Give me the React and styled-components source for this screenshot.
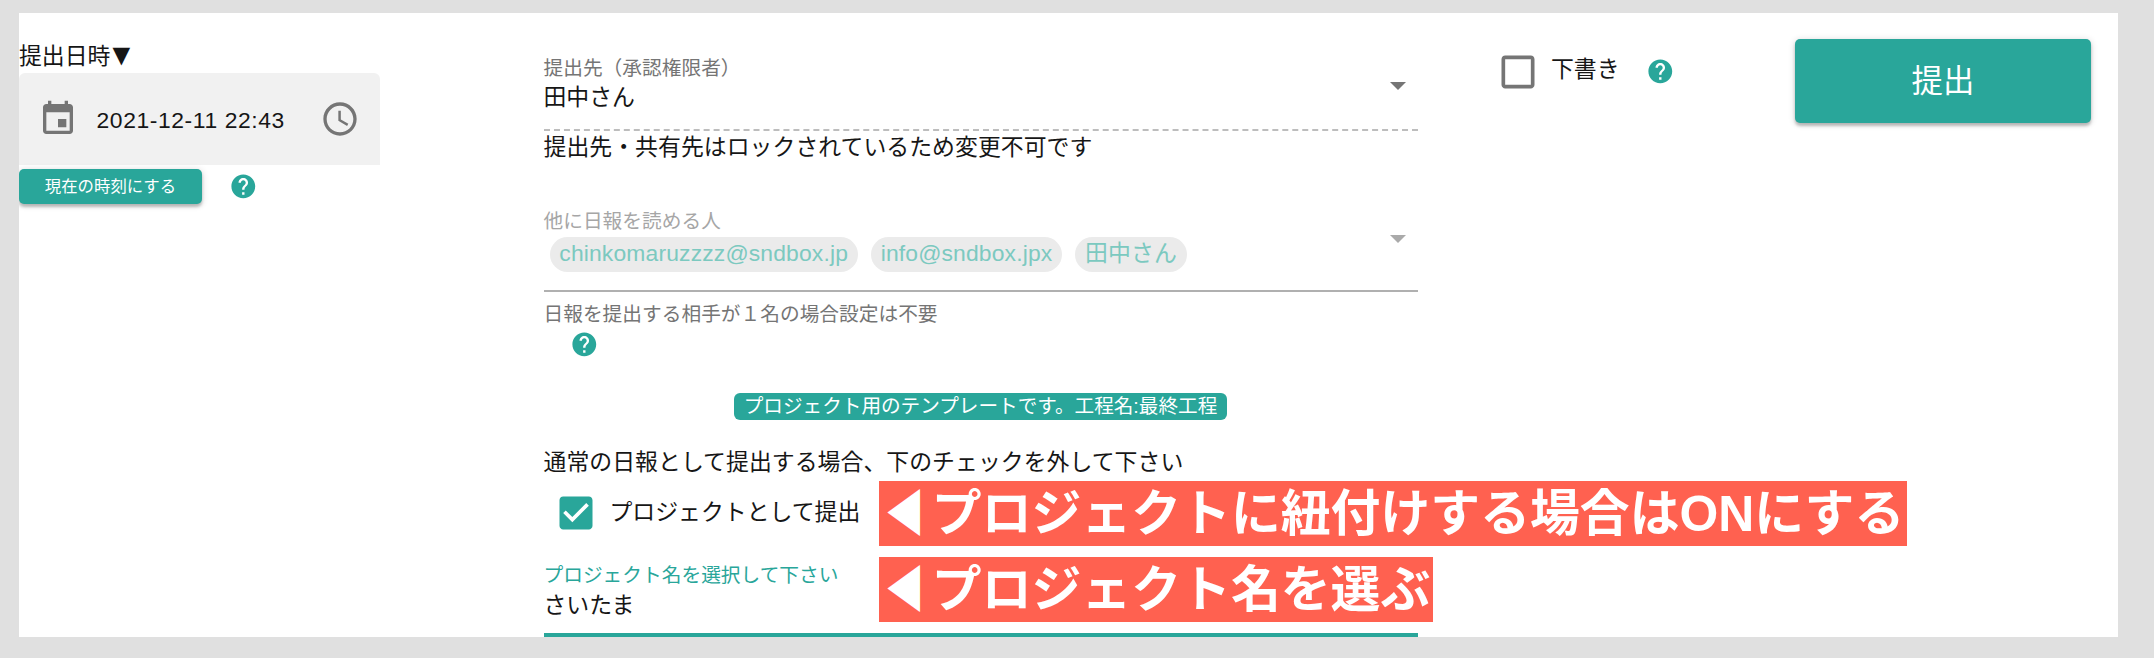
import React from "react";
import styled, { createGlobalStyle } from "styled-components";

const teal = "#29a69a";

const GlobalStyle = createGlobalStyle`
  body {
    margin: 0;
    background: #e0e0e0;
    color: #161616;
    font-family: "Liberation Sans", "Noto Sans CJK JP", sans-serif;
    font-size: 22.86px;
  }
  * { box-sizing: border-box; }
`;

const Page = styled.div`
  height: 658px;
  padding: 13px 36px 21px 19px;
  background: #e0e0e0;
`;

const Panel = styled.main`
  position: relative;
  display: flex;
  align-items: flex-start;
  height: 624px;
  background: #fff;
  overflow: hidden;
  white-space: nowrap;
`;

const DateColumn = styled.section`
  width: 524.5px;
  padding-top: 26px;
`;

const DateLabel = styled.div`
  display: flex;
  height: 34px;
  line-height: 34px;
`;

const DownMark = styled.span`
  margin-left: -4px;
  font-size: 30px;
  line-height: 31px;
`;

const DateField = styled.div`
  display: flex;
  align-items: center;
  width: 361px;
  height: 92px;
  padding: 0 20px 0 19px;
  border-radius: 6px 6px 0 0;
  background: #f1f1f1;
`;

const DateValue = styled.span`
  flex: 1;
  margin-left: 18.5px;
  padding-top: 2px;
  letter-spacing: 0.6px;
`;

const NowRow = styled.div`
  display: flex;
  align-items: center;
  gap: 26.5px;
  margin-top: 4px;
`;

const Button = styled.button`
  width: ${(p) => (p.$large ? 296 : 183)}px;
  height: ${(p) => (p.$large ? 84 : 35)}px;
  padding: 0 0 ${(p) => (p.$large ? 5 : 3)}px;
  border: 0;
  border-radius: 5px;
  background: ${teal};
  color: #fff;
  font-family: inherit;
  font-size: ${(p) => (p.$large ? 31.4 : 16.4)}px;
  box-shadow: 0 3px 3px rgba(0, 0, 0, 0.22), 0 1px 7px rgba(0, 0, 0, 0.16);
`;

const FormColumn = styled.section`
  display: flex;
  flex-direction: column;
  width: 874px;
  padding-top: 41px;
`;

const Select = styled.div`
  display: flex;
  align-items: center;
  justify-content: space-between;
  padding: 0 12px ${(p) => p.$bottom}px 0;
  margin-top: ${(p) => p.$top || 0}px;
  border-bottom: ${(p) => p.$line};
`;

const Label = styled.div`
  height: 28px;
  line-height: 28px;
  font-size: 19.72px;
  color: ${(p) => p.$color || "#757575"};
`;

const Value = styled.div`
  height: 33px;
  line-height: ${(p) => p.$line || 31}px;
`;

const Arrow = styled.i`
  border: 8px solid transparent;
  border-top-color: ${(p) => p.$color};
  border-bottom: 0;
  margin-bottom: ${(p) => p.$lift || 0}px;
`;

const Chips = styled.div`
  display: flex;
  gap: 13px;
  padding: 2px 0 0 6px;
`;

const Chip = styled.span`
  height: 35px;
  line-height: 33px;
  padding: 0 9.8px;
  border-radius: 17.5px;
  background: #ebebeb;
  color: #7cc9c0;
  letter-spacing: 0.16px;
`;

const Note = styled.p`
  margin: ${(p) => p.$top || 0}px 0 0;
  height: 32px;
  line-height: 32px;
  letter-spacing: 0.04px;
`;

const HelperText = styled(Label)`
  margin-top: 8px;
`;

const HelpRow = styled.div`
  display: flex;
  padding: 2px 0 1px 26px;
`;

const Badge = styled.div`
  align-self: center;
  height: 27px;
  margin-top: 33px;
  padding: 0 10px;
  border-radius: 6px;
  background: ${teal};
  color: #fff;
  font-size: 19.62px;
  line-height: 27px;
`;

const CheckRow = styled.label`
  display: flex;
  align-items: center;
  height: 44px;
  margin: 13.5px 0 0 10.5px;
`;

const CheckText = styled.span`
  margin: 0 0 0 11.5px;
  padding-bottom: ${(p) => p.$lift}px;
`;

const DraftColumn = styled.section`
  display: flex;
  align-items: center;
  width: 299.5px;
  height: 44px;
  margin: 37px 0 0 78px;
`;

const DraftHelp = styled.span`
  display: flex;
  margin: -2px 0 0 26px;
`;

const SubmitColumn = styled.section`
  padding-top: 26px;
`;

const Callout = styled.div`
  position: absolute;
  left: 860px;
  top: ${(p) => p.$top}px;
  display: flex;
  width: ${(p) => p.$width}px;
  height: 65px;
  padding-left: 3px;
  background: #ff6150;
  color: #fff;
  font-size: 49.85px;
  font-weight: 700;
  line-height: 66px;
`;

const Pointer = styled.span`
  transform: translateX(-2px) scaleX(0.8);
`;

const Icon = styled.svg`
  display: block;
  flex: none;
  width: ${(p) => p.$size}px;
  height: ${(p) => p.$size}px;
  fill: ${(p) => p.$color};
`;

const EventIcon = () => (
  <Icon viewBox="0 0 24 24" $size={40} $color="#757575">
    <path d="M17 12h-5v5h5v-5zM16 1v2H8V1H6v2H5c-1.11 0-1.99.9-1.99 2L3 19c0 1.1.89 2 2 2h14c1.1 0 2-.9 2-2V5c0-1.1-.9-2-2-2h-1V1h-2zm3 18H5V8h14v11z" />
  </Icon>
);

const ClockIcon = () => (
  <Icon viewBox="0 0 24 24" $size={40} $color="#757575">
    <path d="M11.99 2C6.47 2 2 6.48 2 12s4.47 10 9.99 10C17.52 22 22 17.52 22 12S17.52 2 11.99 2zM12 20c-4.42 0-8-3.58-8-8s3.58-8 8-8 8 3.58 8 8-3.58 8-8 8zm.5-13H11v6l5.25 3.15.75-1.23-4.5-2.67V7z" />
  </Icon>
);

const HelpIcon = () => (
  <Icon viewBox="0 0 24 24" $size={28.6} $color={teal}>
    <path d="M12 2C6.48 2 2 6.48 2 12s4.48 10 10 10 10-4.48 10-10S17.52 2 12 2zm1 17h-2v-2h2v2zm2.07-7.75l-.9.92C13.45 12.9 13 13.5 13 15h-2v-.5c0-1.1.45-2.1 1.17-2.83l1.24-1.26c.37-.36.59-.86.59-1.41 0-1.1-.9-2-2-2s-2 .9-2 2H8c0-2.21 1.79-4 4-4s4 1.79 4 4c0 .88-.36 1.68-.93 2.25z" />
  </Icon>
);

const CheckboxIcon = ({ checked }) => (
  <Icon viewBox="0 0 24 24" $size={44} $color={checked ? teal : "#757575"}>
    <path
      d={
        checked
          ? "M19 3H5c-1.11 0-2 .9-2 2v14c0 1.1.89 2 2 2h14c1.11 0 2-.9 2-2V5c0-1.1-.89-2-2-2zm-9 14l-5-5 1.41-1.41L10 14.17l7.59-7.59L19 8l-9 9z"
          : "M19 5v14H5V5h14m0-2H5c-1.1 0-2 .9-2 2v14c0 1.1.9 2 2 2h14c1.1 0 2-.9 2-2V5c0-1.1-.9-2-2-2z"
      }
    />
  </Icon>
);

const readers = ["chinkomaruzzzz@sndbox.jp", "info@sndbox.jpx", "田中さん"];

export default function App() {
  return (
    <Page lang="ja">
      <GlobalStyle />
      <Panel>
        <DateColumn>
          <DateLabel>
            提出日時<DownMark>▼</DownMark>
          </DateLabel>
          <DateField>
            <EventIcon />
            <DateValue>2021-12-11 22:43</DateValue>
            <ClockIcon />
          </DateField>
          <NowRow>
            <Button>現在の時刻にする</Button>
            <HelpIcon />
          </NowRow>
        </DateColumn>

        <FormColumn>
          <Select $bottom={14} $line="2px dashed #bdbdbd">
            <div>
              <Label>提出先（承認権限者）</Label>
              <Value>田中さん</Value>
            </div>
            <Arrow $color="#757575" $lift={-3} />
          </Select>
          <Note>提出先・共有先はロックされているため変更不可です</Note>

          <Select $top={44} $bottom={18} $line="2px solid #b0b0b0">
            <div>
              <Label $color="#a6a6a6">他に日報を読める人</Label>
              <Chips>
                {readers.map((name) => (
                  <Chip key={name}>{name}</Chip>
                ))}
              </Chips>
            </div>
            <Arrow $color="#aaa" $lift={1} />
          </Select>
          <HelperText>日報を提出する相手が１名の場合設定は不要</HelperText>
          <HelpRow>
            <HelpIcon />
          </HelpRow>

          <Badge>プロジェクト用のテンプレートです。工程名:最終工程</Badge>

          <Note $top={26}>通常の日報として提出する場合、下のチェックを外して下さい</Note>
          <CheckRow>
            <CheckboxIcon checked />
            <CheckText $lift={7}>プロジェクトとして提出</CheckText>
          </CheckRow>

          <Select $top={25.5} $bottom={11.5} $line={`4px solid ${teal}`}>
            <div>
              <Label $color={teal}>プロジェクト名を選択して下さい</Label>
              <Value $line={32}>さいたま</Value>
            </div>
          </Select>
        </FormColumn>

        <DraftColumn>
          <CheckboxIcon />
          <CheckText $lift={10}>下書き</CheckText>
          <DraftHelp>
            <HelpIcon />
          </DraftHelp>
        </DraftColumn>

        <SubmitColumn>
          <Button $large>提出</Button>
        </SubmitColumn>

        <Callout $top={468} $width={1028}>
          <Pointer>◀</Pointer>プロジェクトに紐付けする場合はONにする
        </Callout>
        <Callout $top={544} $width={554}>
          <Pointer>◀</Pointer>プロジェクト名を選ぶ
        </Callout>
      </Panel>
    </Page>
  );
}
